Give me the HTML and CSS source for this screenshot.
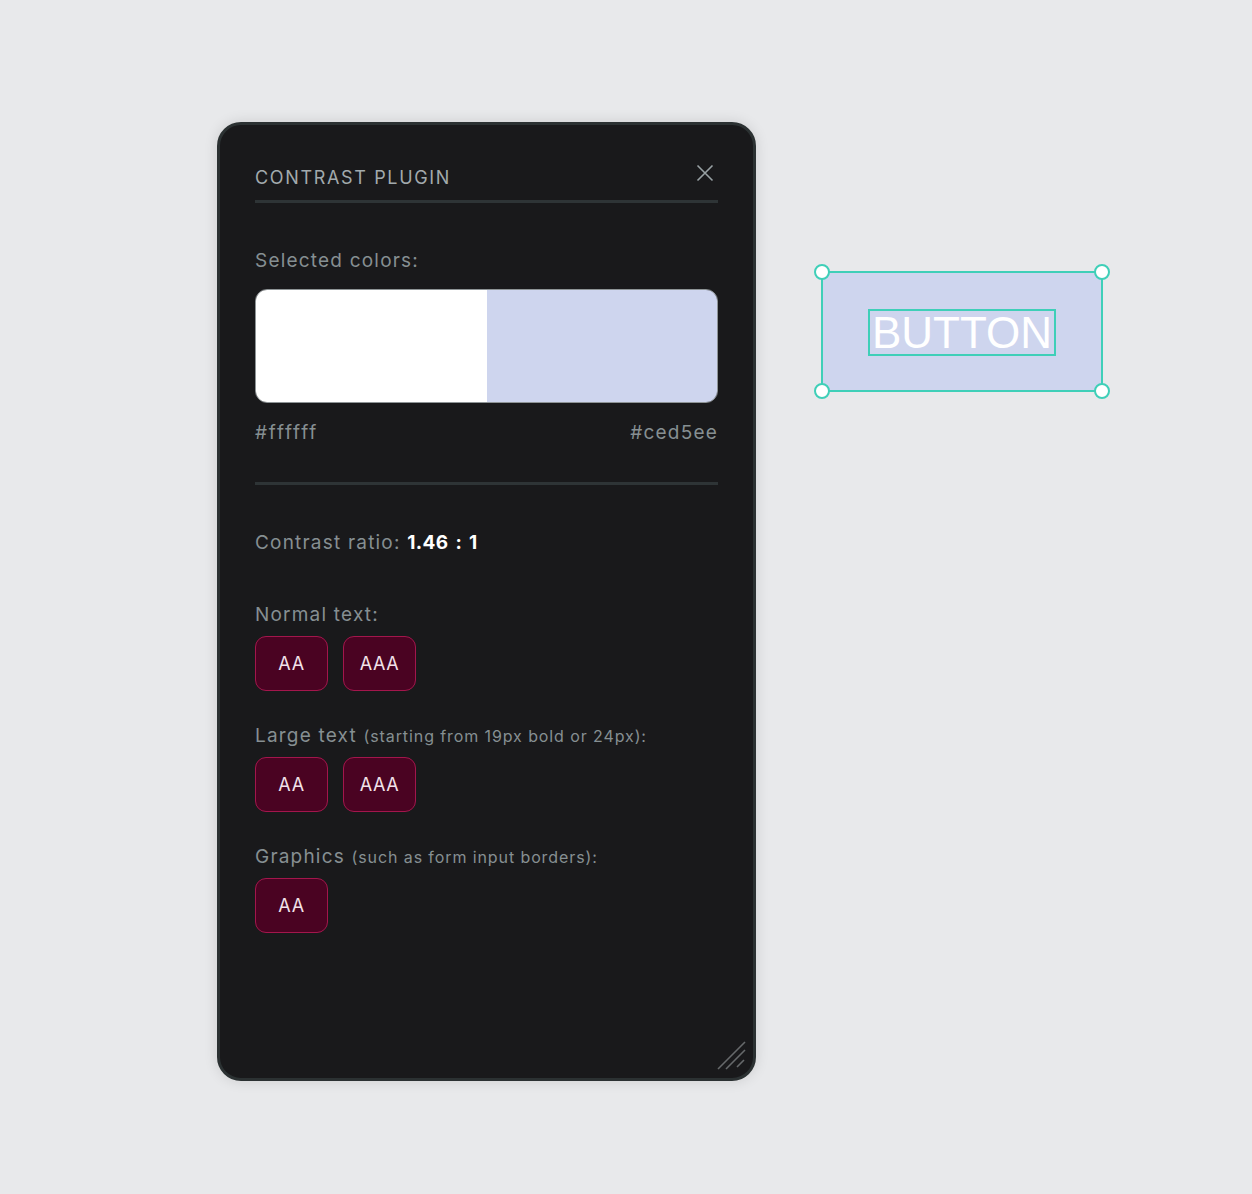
FILE: index.html
```html
<!DOCTYPE html>
<html>
<head>
<meta charset="utf-8">
<link rel="stylesheet" href="styles.css">
</head>
<body>
<div class="stage">
  <section class="panel">
    <header class="panel-head">
      <h1 class="title">CONTRAST PLUGIN</h1>
      <svg class="close" width="18" height="18" viewBox="0 0 18 18"><path d="M1.5 1.5 L16.5 16.5 M16.5 1.5 L1.5 16.5" stroke="#98a1a4" stroke-width="1.6" fill="none"/></svg>
    </header>
    <div class="colors">
      <p class="label">Selected colors:</p>
      <div class="swatch">
        <div class="swatch-half swatch-a"></div>
        <div class="swatch-half swatch-b"></div>
      </div>
      <div class="hexes"><span>#ffffff</span><span>#ced5ee</span></div>
    </div>
    <div class="results">
      <p class="label ratio">Contrast ratio: <strong>1.46 : 1</strong></p>
      <p class="label group-label">Normal text:</p>
      <div class="badges"><span class="badge">AA</span><span class="badge">AAA</span></div>
      <p class="label group-label">Large text <small>(starting from 19px bold or 24px):</small></p>
      <div class="badges"><span class="badge">AA</span><span class="badge">AAA</span></div>
      <p class="label group-label">Graphics <small>(such as form input borders):</small></p>
      <div class="badges"><span class="badge">AA</span></div>
    </div>
    <svg class="resize" width="30" height="30" viewBox="0 0 30 30"><path d="M1 29 L28 2 M9 29 L28 10 M20 27 L27 20" stroke="#66696b" stroke-width="1.6" fill="none"/></svg>
  </section>
  <div class="artboard">
    <div class="selection">
      <span class="text-box">BUTTON</span>
      <i class="handle tl"></i><i class="handle tr"></i><i class="handle bl"></i><i class="handle br"></i>
    </div>
  </div>
</div>
</body>
</html>
```
FILE: styles.css
```css
html, body { margin: 0; padding: 0; }
body {
  background: #e8e9eb;
  font-family: Inter, "Noto Sans", sans-serif;
  width: 1252px;
  height: 1194px;
  overflow: hidden;
}
.stage {
  display: flex;
  align-items: flex-start;
  padding: 122px 0 0 217px;
  gap: 65px;
}
.panel {
  position: relative;
  box-sizing: border-box;
  width: 539px;
  height: 959px;
  background: #19191b;
  border: 3px solid #2b3132;
  border-radius: 24px;
  padding: 41px 35px 0 35px;
  box-shadow: 0 0 14px rgba(0,0,0,0.12);
}
.panel-head {
  display: flex;
  justify-content: space-between;
  align-items: flex-start;
  border-bottom: 3px solid #2e3436;
  padding-bottom: 10px;
}
.title {
  margin: 0;
  font-size: 18px;
  font-weight: 400;
  line-height: 24px;
  letter-spacing: 1.65px;
  color: #a2aaad;
}
.close { margin-top: -2px; margin-right: 4px; }
.label {
  margin: 0;
  font-size: 19px;
  line-height: 24px;
  letter-spacing: 1.2px;
  color: #868f92;
}
.label small { font-size: 16px; letter-spacing: 0.9px; }
.label strong { color: #ffffff; font-weight: 700; letter-spacing: 0.4px; word-spacing: 2px; }
.colors {
  padding-top: 46px;
  padding-bottom: 37px;
  border-bottom: 3px solid #2e3436;
}
.swatch {
  margin-top: 16px;
  display: flex;
  height: 114px;
  border-radius: 12px;
  overflow: hidden;
  box-sizing: border-box;
  border: 1px solid #8e9496;
}
.swatch-half { flex: 1; }
.swatch-a { background: #ffffff; }
.swatch-b { background: #ced5ee; }
.hexes {
  margin-top: 18px;
  display: flex;
  justify-content: space-between;
  font-size: 19px;
  line-height: 24px;
  letter-spacing: 1.2px;
  color: #868f92;
}
.hexes span:first-child { letter-spacing: 1.8px; }
.results { padding-top: 46px; }
.ratio { margin-bottom: 48px; }
.group-label { margin-bottom: 9px; }
.badges {
  display: flex;
  gap: 15px;
  margin-bottom: 33px;
}
.badge {
  box-sizing: border-box;
  width: 73px;
  height: 55px;
  display: flex;
  align-items: center;
  justify-content: center;
  background: #4a0322;
  border: 1px solid #a3164c;
  border-radius: 11px;
  color: #f2e2e9;
  font-size: 18px;
  letter-spacing: 0.6px;
}
.resize {
  position: absolute;
  right: 6px;
  bottom: 8px;
}
.artboard { padding-top: 149px; }
.selection {
  position: relative;
  box-sizing: border-box;
  width: 282px;
  height: 121px;
  background: #ced5ee;
  border: 2px solid #3fcfb8;
  display: flex;
  align-items: center;
  justify-content: center;
}
.text-box {
  box-sizing: border-box;
  border: 2px solid #3fcfb8;
  height: 47px;
  padding: 0 2px;
  font-family: "Liberation Sans", Arial, sans-serif;
  font-size: 44px;
  line-height: 44px;
  color: #ffffff;
  margin-top: 2px;
}
.handle {
  position: absolute;
  width: 12px;
  height: 12px;
  border-radius: 50%;
  background: #ffffff;
  border: 2px solid #3fcfb8;
}
.tl { left: -9px; top: -9px; }
.tr { right: -9px; top: -9px; }
.bl { left: -9px; bottom: -9px; }
.br { right: -9px; bottom: -9px; }
```
